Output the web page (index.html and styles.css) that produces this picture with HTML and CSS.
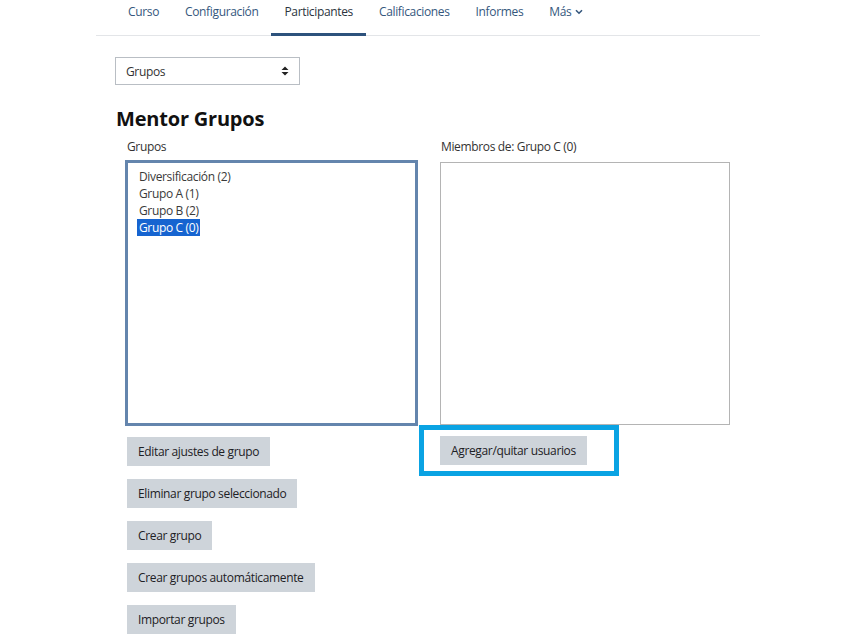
FILE: index.html
```html
<!DOCTYPE html>
<html>
<head>
    <title>Grupos</title>
    <link rel="stylesheet" href="styles.css">
</head>
<body>
<div class="page">
    <nav class="course-nav">
        <a href="#">Curso</a>
        <a href="#">Configuración</a>
        <a href="#" class="active">Participantes</a>
        <a href="#">Calificaciones</a>
        <a href="#">Informes</a>
        <a href="#">Más <svg class="chevron" width="8" height="6" viewBox="0 0 8 6"><path d="M1 1.2 L4 4.2 L7 1.2" fill="none" stroke="currentColor" stroke-width="1.6"/></svg></a>
    </nav>

    <div class="content">
        <div class="fake-select">
            <span>Grupos</span>
            <svg width="8" height="10" viewBox="0 0 8 10"><path d="M4 0.5 L7.5 4 H0.5 Z M4 9.5 L7.5 6 H0.5 Z" fill="#222"/></svg>
        </div>

        <h2>Mentor Grupos</h2>

        <div class="columns">
            <div class="col">
                <label class="col-label">Grupos</label>
                <div class="listbox focused">
                    <div class="option">Diversificación (2)</div>
                    <div class="option">Grupo A (1)</div>
                    <div class="option">Grupo B (2)</div>
                    <div class="option selected">Grupo C (0)</div>
                </div>
                <div class="buttons">
                    <button class="btn">Editar ajustes de grupo</button>
                    <button class="btn">Eliminar grupo seleccionado</button>
                    <button class="btn">Crear grupo</button>
                    <button class="btn">Crear grupos automáticamente</button>
                    <button class="btn">Importar grupos</button>
                </div>
            </div>
            <div class="col right">
                <label class="col-label">Miembros de: Grupo C (0)</label>
                <div class="listbox plain"></div>
                <div class="buttons">
                    <div class="highlight-wrap">
                        <button class="btn">Agregar/quitar usuarios</button>
                        <span class="highlight"></span>
                    </div>
                </div>
            </div>
        </div>
    </div>
</div>
</body>
</html>
```

FILE: styles.css
```css
body {
    margin: 0;
    font-family: "Open Sans", "Noto Sans", sans-serif;
    font-size: 12px;
    letter-spacing: -0.35px;
    color: #1d2125;
    background-color: white;
}
.page {
    width: 664px;
    margin-left: 96px;
}
.course-nav {
    display: flex;
    padding-left: 19px;
    border-bottom: 1px solid #e3e5e8;
}
.course-nav a {
    display: flex;
    align-items: center;
    gap: 4px;
    height: 17px;
    padding: 3px 13px 13px;
    border-bottom: 3px solid transparent;
    margin-bottom: -1px;
    color: #35577d;
    text-decoration: none;
    line-height: 17px;
}
.course-nav a.active {
    color: #2b3440;
    border-bottom-color: #2d527c;
}
.chevron {
    margin-top: 1px;
}
.content {
    padding-left: 19px;
}
.fake-select {
    display: flex;
    align-items: center;
    justify-content: space-between;
    box-sizing: border-box;
    width: 185px;
    height: 28px;
    margin-top: 21px;
    padding: 0 10px 0 10px;
    border: 1px solid #b9bec4;
    color: #333;
}
h2 {
    margin: 22px 0 0 1px;
    font-size: 20px;
    line-height: 24px;
    font-weight: 700;
    letter-spacing: -0.2px;
    color: #111;
}
.columns {
    display: flex;
    gap: 22px;
    margin-top: 7px;
    padding-left: 10px;
}
.col {
    width: 293px;
}
.col.right {
    width: 290px;
}
.col-label {
    display: block;
    padding-left: 2px;
    line-height: 17px;
    color: #333;
}
.col.right .col-label {
    padding-left: 1px;
}
.listbox {
    box-sizing: border-box;
    background-color: white;
}
.listbox.focused {
    height: 266px;
    margin-top: 5px;
    padding: 5px 9px;
    border: 3px solid #6485ad;
}
.listbox.plain {
    height: 263px;
    margin-top: 7px;
    border: 1px solid #b4b4b4;
}
.option {
    display: table;
    padding: 0 2px;
    line-height: 17px;
    color: #3a3a3a;
}
.option.selected {
    background-color: #1664d0;
    color: white;
}
.buttons {
    display: flex;
    flex-direction: column;
    align-items: flex-start;
    gap: 13px;
    margin-top: 11px;
    padding-left: 2px;
}
.col.right .buttons {
    padding-left: 0;
}
.btn {
    height: 29px;
    padding: 0 11px;
    border: none;
    background-color: #ced4da;
    font-family: inherit;
    font-size: 12px;
    letter-spacing: inherit;
    color: #1d2125;
}
.highlight-wrap {
    position: relative;
}
.highlight {
    position: absolute;
    left: -21px;
    top: -11px;
    right: -32px;
    bottom: -11px;
    border: 5px solid #0aa3e3;
}
```
